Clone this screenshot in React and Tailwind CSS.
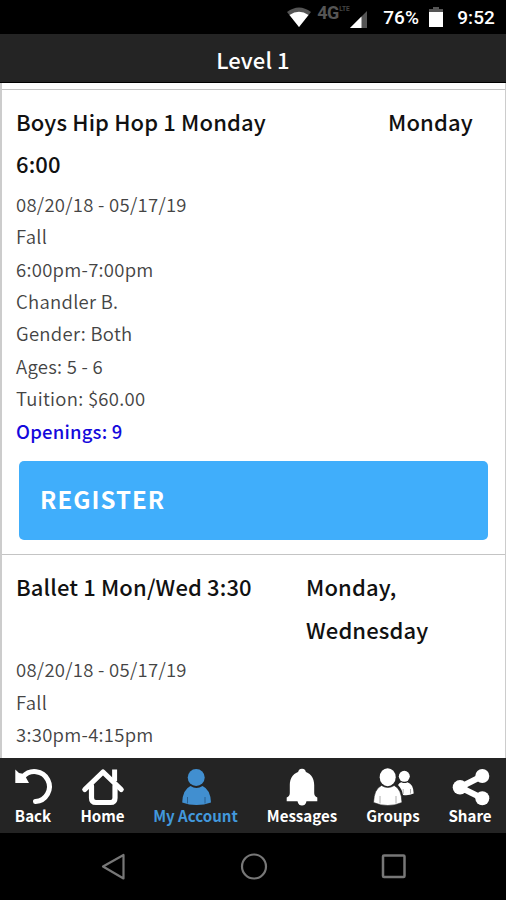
const classes = [
  {
    name: ['Boys Hip Hop 1 Monday', '6:00'],
    days: ['Monday'],
    daysClass: 'w-[103px]',
    details: ['08/20/18 - 05/17/19', 'Fall', '6:00pm-7:00pm', 'Chandler B.', 'Gender: Both', 'Ages: 5 - 6', 'Tuition: $60.00'],
    openings: 9,
  },
  {
    name: ['Ballet 1 Mon/Wed 3:30'],
    days: ['Monday,', 'Wednesday'],
    daysClass: 'w-[185px]',
    details: ['08/20/18 - 05/17/19', 'Fall', '3:30pm-4:15pm'],
  },
];

function BackIcon() {
  return (
    <svg viewBox="0 0 46 40" className="w-[46px] h-10" fill="none">
      <path d="M13 9.800A15 15 0 1 1 25.500 34.500" stroke="white" strokeWidth="5" strokeLinecap="round" />
      <path d="M5.300 2.500L9 6L14 7L19 16H5.300Z" fill="white" />
    </svg>
  );
}

function HomeIcon() {
  return (
    <svg viewBox="0 0 46 40" className="w-[46px] h-10" fill="none" stroke="white" strokeLinecap="round" strokeLinejoin="round">
      <path d="M4.800 22.500L23 5L41.200 22.500" strokeWidth="5.200" />
      <path d="M34.600 2.500V14" strokeWidth="5" strokeLinecap="butt" />
      <path d="M11.500 19V31Q11.500 35.500 16 35.500H30.500Q35 35.500 35 31V19" strokeWidth="5.200" />
    </svg>
  );
}

function AccountIcon() {
  return (
    <svg viewBox="0 0 46 40" className="w-[46px] h-10">
      <circle cx="23.200" cy="10.500" r="8.500" fill="#418fd0" />
      <path d="M17.500 19Q23.500 23 29.500 19Q37.500 22.500 38 35.500Q31 38 23.500 38T9.200 35.500Q9.700 22.500 17.500 19Z" fill="#418fd0" />
      <path d="M14.500 30V36.500M32 30V36.500" stroke="#285f90" strokeWidth="1" />
    </svg>
  );
}

function BellIcon() {
  return (
    <svg viewBox="0 0 46 40" className="w-[46px] h-10" fill="white">
      <circle cx="23" cy="5.500" r="3.800" />
      <circle cx="23" cy="34.300" r="4.300" />
      <path d="M23 4C14.500 5 10.800 11 10.800 18V26Q10.800 29 7.700 30.500V34.300H38.300V30.500Q35.200 29 35.200 26V18C35.200 11 31.500 5 23 4Z" />
    </svg>
  );
}

function GroupsIcon() {
  return (
    <svg viewBox="0 0 46 40" className="w-[46px] h-10" fill="white">
      <circle cx="34.300" cy="9.300" r="5.500" />
      <path d="M28 18Q29.500 15.500 31.500 15.200Q34.500 17 37.500 15.200Q43.500 17 43.700 26.500Q38.500 29 33 28Q32 22 28 18Z" />
      <path d="M33.200 22V27M40.500 22V26.500" stroke="#999" strokeWidth="0.800" />
      <ellipse cx="17.700" cy="10.200" rx="8" ry="9" />
      <path d="M11.500 18.500Q17.800 22.500 24.200 18.500Q31.500 22 32 35.500Q25.500 38.500 17.800 38.500T3.500 35.500Q4 22 11.500 18.500Z" stroke="#242424" strokeWidth="0.600" />
      <path d="M10 29V36.500M26 29V36.500" stroke="#999" strokeWidth="0.800" />
    </svg>
  );
}

function ShareIcon() {
  return (
    <svg viewBox="0 0 46 40" className="w-[46px] h-10" fill="white">
      <path d="M35.300 9L13 20.300L35.300 31.300" fill="none" stroke="white" strokeWidth="6" />
      <circle cx="35.300" cy="9" r="7" />
      <circle cx="13" cy="20.300" r="7.300" />
      <circle cx="35.300" cy="31.300" r="7" />
    </svg>
  );
}

const tabs = [
  { label: 'Back', icon: BackIcon, className: 'w-[66px]' },
  { label: 'Home', icon: HomeIcon, className: 'w-[73px]' },
  { label: 'My Account', icon: AccountIcon, className: 'w-[113px]', active: true },
  { label: 'Messages', icon: BellIcon, className: 'w-[100px]' },
  { label: 'Groups', icon: GroupsIcon, className: 'w-[82px]' },
  { label: 'Share', icon: ShareIcon, className: 'w-[72px]' },
];

function StatusBar() {
  return (
    <div className="h-[34px] shrink-0 bg-black flex items-center justify-end pr-[11px] text-white font-['Roboto',sans-serif] font-medium text-[19px]">
      <svg viewBox="0 0 26 22" className="w-[26px] h-[22px]">
        <path d="M1 6Q13 -3 25 6L13 21Z" fill="#555" />
        <path d="M3.500 9Q13 2.500 22.500 9L13 21Z" fill="white" />
      </svg>
      <span className="ml-[5px] mb-[10px] flex items-start text-[#555] font-bold">
        <span className="w-[22px] text-[18px] leading-[15px] tracking-[-0.5px]">4G</span>
        <span className="w-[10px] text-[6.500px] leading-[6px] mt-px text-[#444]">LTE</span>
      </span>
      <svg viewBox="0 0 19 18" className="w-[19px] h-[18px] mt-[5px]">
        <path d="M18 0V17H1Z" fill="#555" />
        <path d="M12.500 5.500V17H1Z" fill="white" />
      </svg>
      <span className="ml-[15px] mt-[2px] w-[38px] tracking-[0.1px]">76%</span>
      <svg viewBox="0 0 16 22" className="w-4 h-[22px] ml-[7px] mt-[2px]">
        <path d="M5 0H11V2H15V6H1V2H5Z" fill="#555" />
        <path d="M1 5H15V20H1Z" fill="white" />
      </svg>
      <span className="ml-[13px] mt-[2px] tracking-[0.1px]">9:52</span>
    </div>
  );
}

function ClassCard({ item }) {
  return (
    <section className="border-t border-[#c4c4c4] px-[14px] pt-[10px]">
      <div className="flex justify-between text-[22px] leading-[42.300px] tracking-[0.130px] font-medium text-[#111]">
        <h2>
          {item.name.map((line) => <div key={line}>{line}</div>)}
        </h2>
        <div className={item.daysClass}>
          {item.days.map((day) => <div key={day}>{day}</div>)}
        </div>
      </div>
      <div className="mt-[3.500px] text-[18.500px] leading-[32.350px] tracking-[0.280px] text-[#444] font-[350]">
        {item.details.map((line) => <div key={line}>{line}</div>)}
        {item.openings && <div className="text-[#1509dc] font-medium tracking-[0.200px]">Openings: {item.openings}</div>}
      </div>
      {item.openings && (
        <button className="mt-[14px] mb-[14.500px] ml-[3px] block w-[469px] h-[79px] rounded-[5px] bg-[#40aefb] pb-[2px] pl-[21px] text-left text-white text-[24px] font-bold tracking-[1.050px]">
          REGISTER
        </button>
      )}
    </section>
  );
}

export default function App() {
  return (
    <div className="w-[506px] h-[900px] flex flex-col overflow-hidden bg-black font-['Noto_Sans_CJK_SC',sans-serif]">
      <StatusBar />
      <header className="h-[49px] shrink-0 bg-[#242424] border-b border-black flex items-center justify-center text-white text-[22px] font-medium">
        <h1 className="mt-[3px] tracking-[0.100px]">Level 1</h1>
      </header>
      <main className="h-[675px] shrink-0 overflow-hidden bg-white border-l-2 border-r border-[#ccc] pt-[6px]">
        {classes.map((item) => <ClassCard key={item.name[0]} item={item} />)}
      </main>
      <nav className="h-[75px] shrink-0 bg-[#242424] flex">
        {tabs.map(({ label, icon: Icon, className, active }) => (
          <div key={label} className={`${className} shrink-0 flex flex-col items-center pt-[9px] text-[15.100px] leading-[16px] font-bold ${active ? 'text-[#4298dc]' : 'text-white'}`}>
            <Icon />
            <span className="whitespace-nowrap">{label}</span>
          </div>
        ))}
      </nav>
      <div className="h-[67px] shrink-0 bg-black flex justify-between items-center pl-[99px] pr-[98px]">
        <svg viewBox="0 0 28 28" className="w-7 h-7" fill="none" stroke="#777" strokeWidth="2.200" strokeLinejoin="round">
          <path d="M4 13.500L24.500 2V25.500Z" />
        </svg>
        <svg viewBox="0 0 28 28" className="w-7 h-7" fill="none" stroke="#777" strokeWidth="2.200">
          <circle cx="14" cy="13.500" r="12" />
        </svg>
        <svg viewBox="0 0 28 28" className="w-7 h-7" fill="none" stroke="#777" strokeWidth="2.500">
          <rect x="3" y="2.500" width="21.500" height="21.500" rx="1" />
        </svg>
      </div>
    </div>
  );
}
